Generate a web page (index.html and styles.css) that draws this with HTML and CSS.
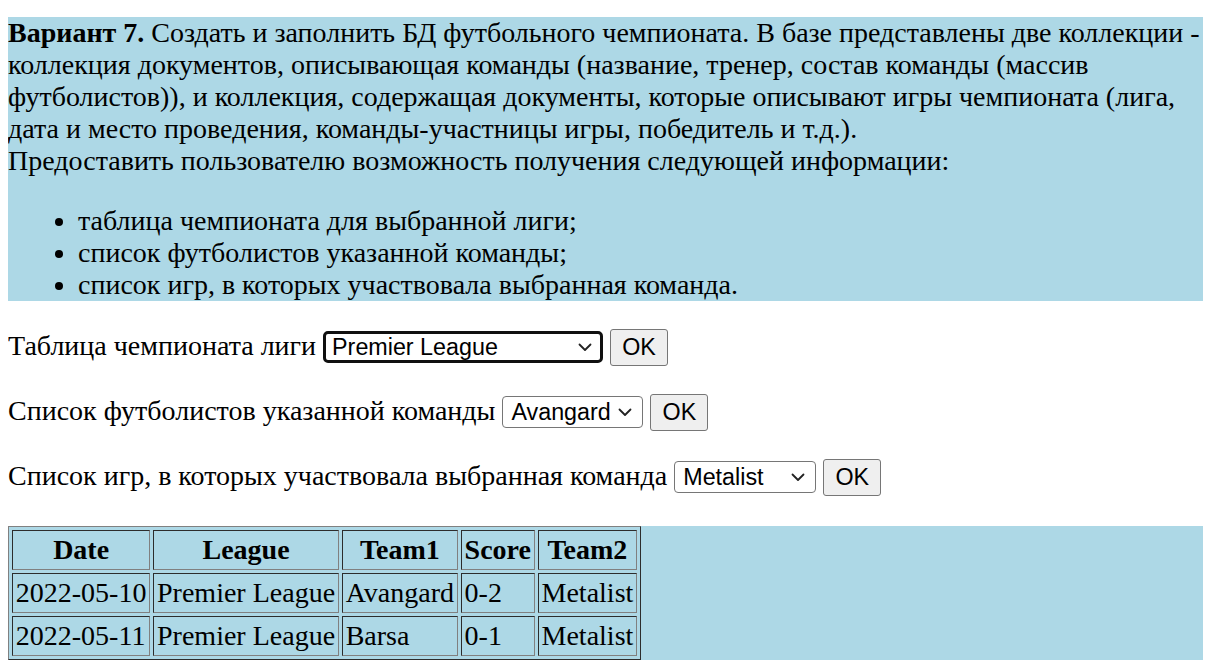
FILE: index.html
```html
<!DOCTYPE html>
<html lang="ru">
<head>
<meta charset="utf-8">
<title>Футбольный чемпионат</title>
<link rel="stylesheet" href="styles.css">
</head>
<body>
<div class="task">
<b>Вариант 7.</b> Создать и заполнить БД футбольного чемпионата. В базе представлены две коллекции - коллекция документов, описывающая команды (название, тренер, состав команды (массив футболистов)), и коллекция, содержащая документы, которые описывают игры чемпионата (лига, дата и место проведения, команды-участницы игры, победитель и т.д.).<br>
Предоставить пользователю возможность получения следующей информации:
<ul class="task-list">
<li>таблица чемпионата для выбранной лиги;</li>
<li>список футболистов указанной команды;</li>
<li>список игр, в которых участвовала выбранная команда.</li>
</ul>
</div>
<form class="query">Таблица чемпионата лиги <span class="select-wrap"><select class="sel sel-league focused"><option>Premier League</option></select><svg class="chev" width="14" height="9" viewBox="0 0 14 9"><path d="M1.5 1.5 L7 7 L12.5 1.5" fill="none" stroke="#222" stroke-width="1.8" stroke-linecap="round" stroke-linejoin="round"/></svg></span> <button type="button" class="ok">OK</button></form>
<form class="query">Список футболистов указанной команды <span class="select-wrap"><select class="sel sel-team"><option>Avangard</option></select><svg class="chev" width="14" height="9" viewBox="0 0 14 9"><path d="M1.5 1.5 L7 7 L12.5 1.5" fill="none" stroke="#222" stroke-width="1.8" stroke-linecap="round" stroke-linejoin="round"/></svg></span> <button type="button" class="ok">OK</button></form>
<form class="query">Список игр, в которых участвовала выбранная команда <span class="select-wrap"><select class="sel sel-games"><option>Metalist</option></select><svg class="chev" width="14" height="9" viewBox="0 0 14 9"><path d="M1.5 1.5 L7 7 L12.5 1.5" fill="none" stroke="#222" stroke-width="1.8" stroke-linecap="round" stroke-linejoin="round"/></svg></span> <button type="button" class="ok">OK</button></form>
<div class="result">
<table class="games">
<tr><th>Date</th><th>League</th><th>Team1</th><th>Score</th><th>Team2</th></tr>
<tr><td>2022-05-10</td><td>Premier League</td><td>Avangard</td><td>0-2</td><td>Metalist</td></tr>
<tr><td>2022-05-11</td><td>Premier League</td><td>Barsa</td><td>0-1</td><td>Metalist</td></tr>
</table>
</div>
</body>
</html>
```
FILE: styles.css
```css
html, body {
  background: #fff;
}
body {
  margin: 8px 6px 8px 8px;
  font-family: "Liberation Serif", "Times New Roman", serif;
  font-size: 28px;
  color: #000;
}
.task {
  margin-top: 9px;
  background: #add8e6;
}
.task-list {
  margin: 28px 0 0;
  padding-left: 70px;
}
.query {
  margin: 28px 0;
}
.select-wrap {
  position: relative;
  display: inline-block;
}
.sel {
  -webkit-appearance: none;
  appearance: none;
  box-sizing: border-box;
  font-family: Arial, "Liberation Sans", sans-serif;
  font-size: 23.3px;
  height: 32px;
  color: #000;
  background: #fff;
  border: 1px solid #767676;
  border-radius: 4px;
  padding: 0 30px 0 8px;
  vertical-align: baseline;
}
.sel-league { width: 280px; }
.sel-team { width: 141px; }
.sel-games { width: 142px; }
.focused {
  border: 3px solid #101010;
  border-radius: 5px;
  padding-left: 6px;
}
.chev {
  position: absolute;
  right: 11px;
  top: 50%;
  margin-top: -4px;
  pointer-events: none;
}
.ok {
  box-sizing: border-box;
  font-family: Arial, "Liberation Sans", sans-serif;
  font-size: 23.3px;
  height: 37px;
  width: 58px;
  padding: 0;
  color: #000;
  background: #efefef;
  border: 1px solid #767676;
  border-radius: 3px;
}
.result {
  margin-top: 30px;
  background: #add8e6;
}
.games {
  border: 1px outset #808080;
  border-spacing: 3.5px;
  font-size: 28px;
}
.games th, .games td {
  border: 1px inset #808080;
  padding: 3px 2.8px;
}
.games td { text-align: left; }
```
